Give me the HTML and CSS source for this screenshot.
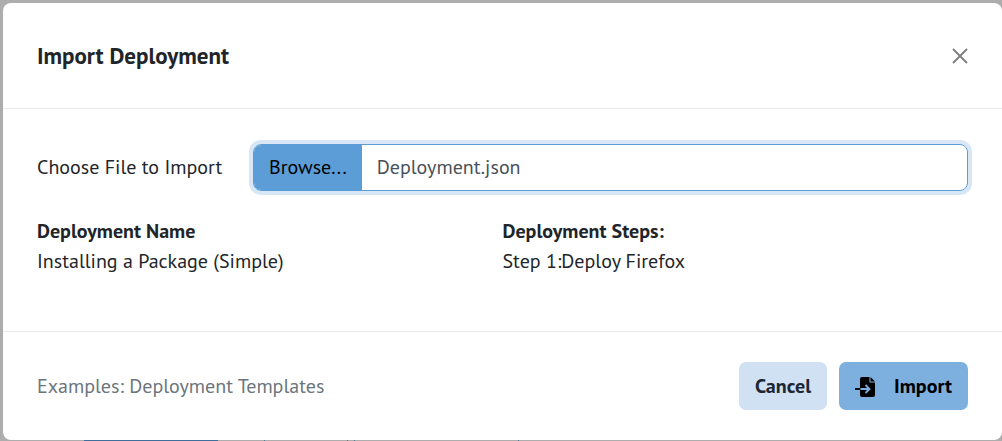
FILE: index.html
```html
<!DOCTYPE html>
<html lang="en">
<head>
  <meta charset="utf-8">
  <meta name="viewport" content="width=device-width, initial-scale=1">
  <title>Import Deployment</title>
  <link rel="stylesheet" href="styles.css">
</head>
<body>
  <form class="modal" role="dialog" aria-labelledby="modal-title">
    <header class="modal-header">
      <h1 class="modal-title" id="modal-title">Import Deployment</h1>
      <button class="close" type="button" aria-label="Close">
        <svg class="close-icon" viewBox="0 0 16 16" aria-hidden="true"><path d="M1 1 15 15M15 1 1 15"/></svg>
      </button>
    </header>
    <main class="modal-body">
      <div class="field">
        <label class="field-label" for="file">Choose File to Import</label>
        <div class="file">
          <span class="file-browse" aria-hidden="true">Browse...</span>
          <span class="file-name">Deployment.json</span>
          <input class="file-input" id="file" type="file" accept=".json">
        </div>
      </div>
      <div class="summary">
        <section>
          <h2 class="summary-title">Deployment Name</h2>
          <p class="summary-text">Installing a Package (Simple)</p>
        </section>
        <section>
          <h2 class="summary-title">Deployment Steps:</h2>
          <p class="summary-text">Step 1:Deploy Firefox</p>
        </section>
      </div>
    </main>
    <footer class="modal-footer">
      <a class="examples" href="#">Examples: Deployment Templates</a>
      <div class="actions">
        <button class="btn btn-cancel" type="button">Cancel</button>
        <button class="btn btn-import" type="submit">
          <svg class="import-icon" viewBox="0 0 21 22" aria-hidden="true">
            <path fill="currentColor" d="M7 2h7.500v5.500H20V20a2 2 0 0 1-2 2H7a2 2 0 0 1-2-2V4a2 2 0 0 1 2-2zM15.500 2 20 6.500h-4.500z"/>
            <path fill="none" stroke="#7eb0df" stroke-width="1.800" d="M5 14h9M10.500 10l4 4-4 4"/>
            <path fill="none" stroke="currentColor" stroke-width="1.800" d="M0 14h5.500"/>
          </svg>
          Import
        </button>
      </div>
    </footer>
  </form>
</body>
</html>
```

FILE: styles.css
```css
* {
  box-sizing: border-box;
}

body {
  display: flex;
  min-height: 100vh;
  margin: 0;
  padding: 3px 0 1px 3px;
  background-color: #adadad;
  background-image:
    linear-gradient(#3f6e9c, #3f6e9c),
    linear-gradient(#56788f, #56788f),
    linear-gradient(#56788f, #56788f),
    linear-gradient(#56788f, #56788f),
    linear-gradient(#56788f, #56788f);
  background-position: 84px 100%, 264px 100%, 347px 100%, 354px 100%, 518px 100%;
  background-size: 134px 1px, 1px 1px, 1px 1px, 1px 1px, 1px 1px;
  background-repeat: no-repeat;
  color: #212529;
  font-family: "PT Sans", Lato, "Noto Sans", sans-serif;
  font-size: 20px;
  line-height: 30px;
}

.modal {
  display: flex;
  flex: 1;
  flex-direction: column;
  border-radius: 8px;
  background: #fff;
}

.modal-header {
  display: flex;
  align-items: center;
  justify-content: space-between;
  padding: 35px 34px;
  border-bottom: 1px solid #e9eaeb;
}

.modal-title {
  margin: 0;
  font-size: 23px;
  line-height: 35px;
}

.close {
  display: flex;
  padding: 0;
  border: 0;
  background: none;
  color: #808080;
  cursor: pointer;
}

.close-icon {
  width: 16px;
  height: 16px;
  fill: none;
  stroke: currentColor;
  stroke-width: 2;
}

.modal-body {
  flex: 1;
  padding: 35px 34px;
}

.field {
  display: grid;
  grid-template-columns: 216px 1fr;
  align-items: center;
}

.field-label {
  padding-bottom: 1px;
}

.file {
  position: relative;
  display: flex;
  overflow: hidden;
  border: 1px solid #5c9dd8;
  border-radius: 8px;
  box-shadow: 0 0 0 4px #d8e7f5;
}

.file-browse,
.file-name {
  padding: 7px 15px 8px;
}

.file-browse {
  background: #5c9dd8;
  color: #000;
}

.file-name {
  color: #495057;
}

.file-input {
  position: absolute;
  inset: 0;
  width: 100%;
  opacity: 0;
  cursor: pointer;
}

.summary {
  display: grid;
  grid-template-columns: 1fr 1fr;
  margin-top: 25px;
}

.summary-title,
.summary-text {
  margin: 0;
  font-size: 20px;
}

.modal-footer {
  display: flex;
  align-items: center;
  justify-content: space-between;
  padding: 30px 34px;
  border-top: 1px solid #e9eaeb;
}

.examples {
  color: #6c757d;
  text-decoration: none;
}

.actions {
  display: flex;
  gap: 12px;
}

.btn {
  display: flex;
  align-items: center;
  gap: 18px;
  padding: 9px 16px;
  border: 0;
  border-radius: 7px;
  font: inherit;
  font-weight: 700;
  cursor: pointer;
}

.btn-cancel {
  background: #cfe1f3;
  color: #1b2733;
}

.btn-import {
  background: #7eb0df;
  color: #000;
}

.import-icon {
  width: 21px;
  height: 22px;
}
```
